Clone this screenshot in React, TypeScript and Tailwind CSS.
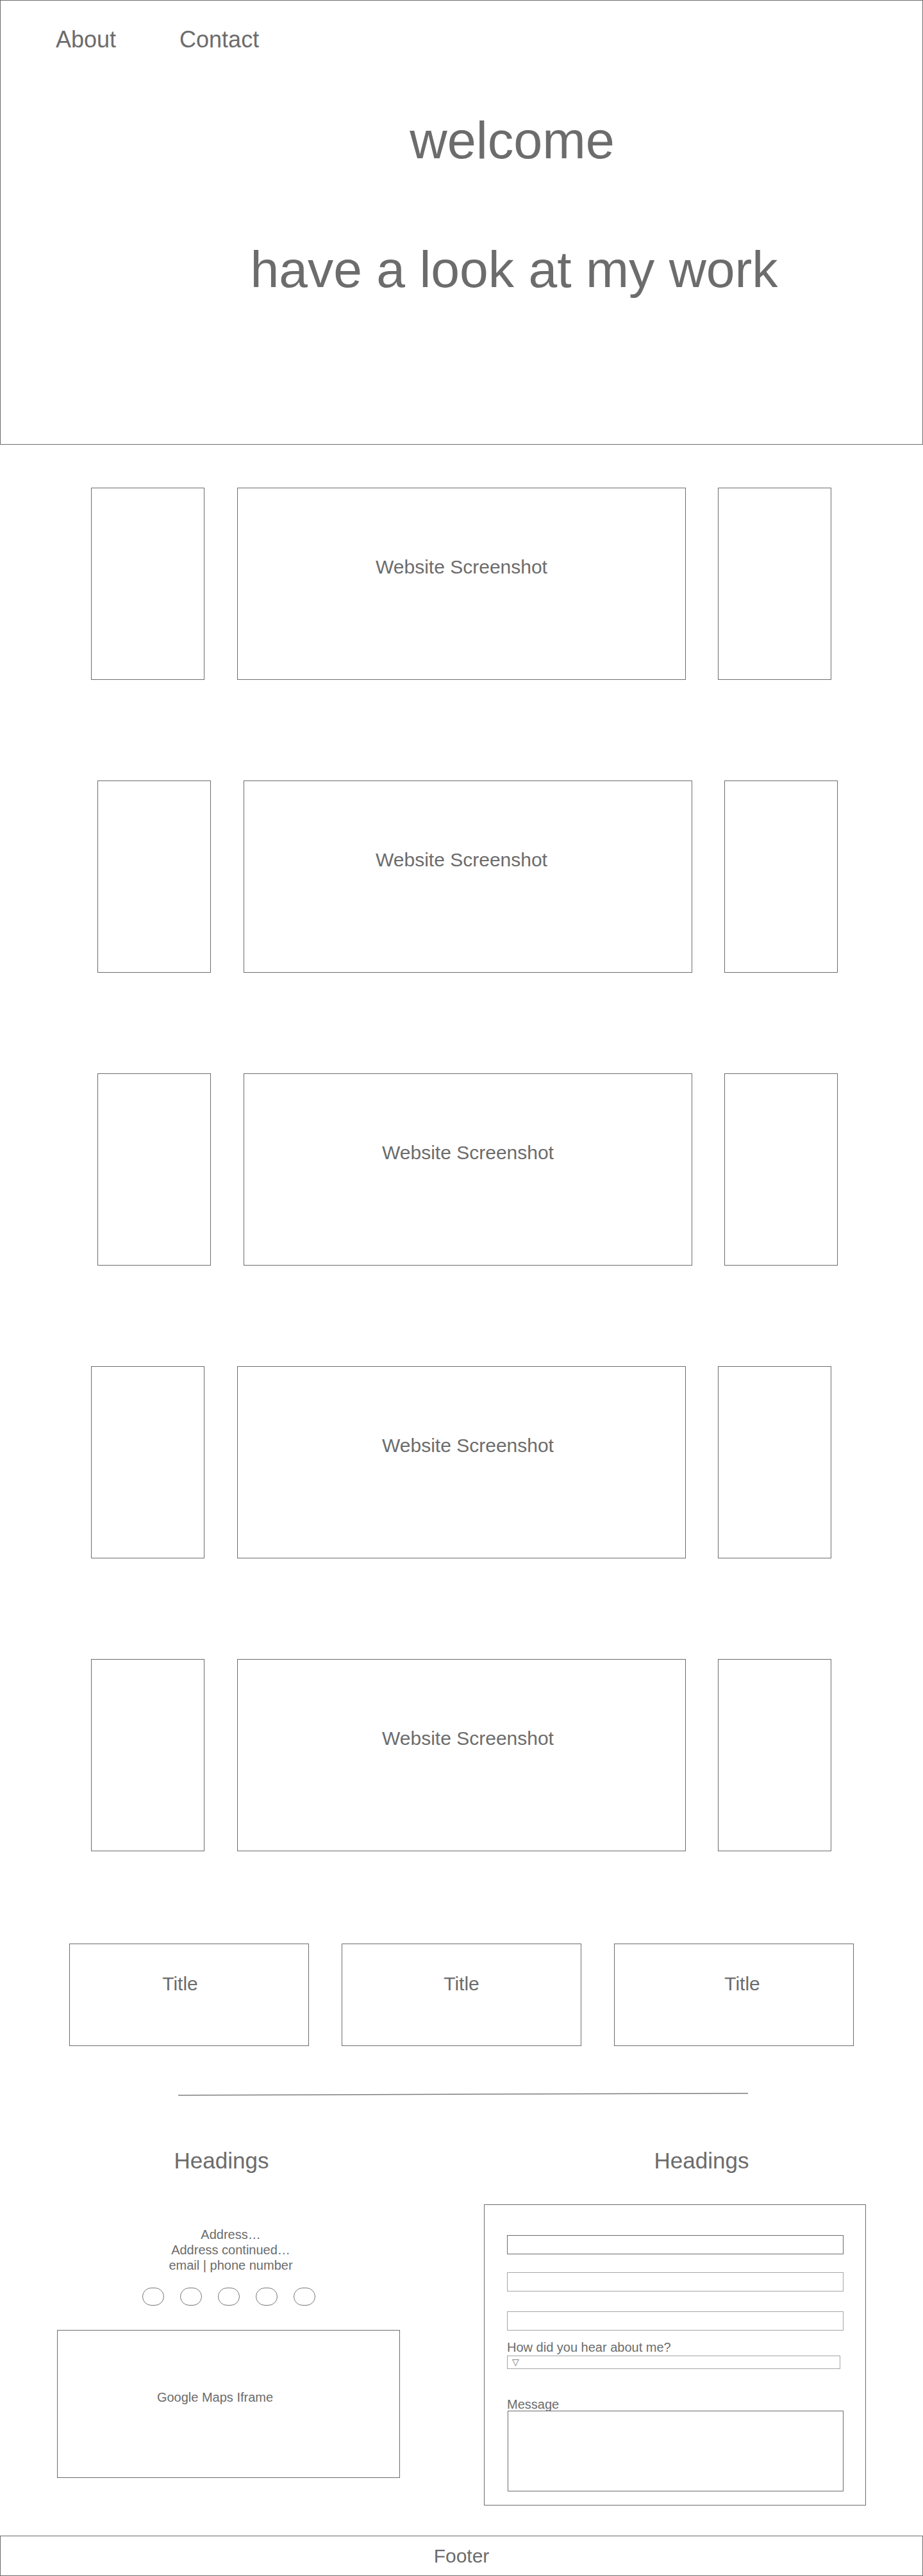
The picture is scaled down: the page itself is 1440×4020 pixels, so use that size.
const rows = [
  { offset: 'pl-[142px]', shift: '' },
  { offset: 'pl-[152px]', shift: 'pr-[20px]' },
  { offset: 'pl-[152px]', shift: '' },
  { offset: 'pl-[142px]', shift: 'pl-[20px]' },
  { offset: 'pl-[142px]', shift: 'pl-[20px]' },
];

const cards = ['pr-[28px]', '', 'pl-[26px]'];

function ProjectRow({ offset, shift }: { offset: string; shift: string }) {
  return (
    <div className={`flex h-[300px] ${offset}`}>
      <div className="w-[177px] h-full border border-[#6c6c6c]" />
      <div className={`ml-[51px] w-[700px] h-full border border-[#6c6c6c] pt-[108px] text-center text-[30px] leading-none ${shift}`}>
        Website Screenshot
      </div>
      <div className="ml-[50px] w-[177px] h-full border border-[#6c6c6c]" />
    </div>
  );
}

export default function App() {
  return (
    <div className="w-[1440px] bg-white text-[#6c6c6c] font-['Liberation_Sans',Arial,sans-serif]">
      {/* hero */}
      <header className="h-[694px] border border-[#6c6c6c]">
        <nav className="flex gap-[99px] pt-[43px] pl-[86px] text-[36px] leading-none">
          <a>About</a>
          <a>Contact</a>
        </nav>
        <h1 className="mt-[99px] pl-[158px] text-center text-[81px] leading-none">welcome</h1>
        <p className="mt-[120px] pl-[164px] text-center text-[80.5px] leading-none">have a look at my work</p>
      </header>

      {/* work */}
      <section className="flex flex-col gap-[157px] pt-[67px]">
        {rows.map((r, i) => (
          <ProjectRow key={i} offset={r.offset} shift={r.shift} />
        ))}
      </section>

      {/* cards */}
      <section className="mt-[144px] flex gap-[51px] pl-[108px]">
        {cards.map((c, i) => (
          <div key={i} className={`w-[374px] h-[160px] border border-[#6c6c6c] pt-[47px] text-center text-[30px] leading-none ${c}`}>
            Title
          </div>
        ))}
      </section>

      <svg className="mt-[71px] block" width="1440" height="10" viewBox="0 0 1440 10">
        <line x1="278" y1="5.7" x2="1167" y2="2.7" stroke="#7e7e7e" strokeWidth="1.5" />
      </svg>

      {/* contact */}
      <section className="flex items-start pt-[80px]">
        <div className="w-[720px]">
          <h2 className="pr-[29px] text-center text-[35px] leading-none">Headings</h2>
          <address className="mt-[86px] text-center text-[20px] leading-[24px] not-italic">
            <div>Address…</div>
            <div>Address continued…</div>
            <div>email | phone number</div>
          </address>
          <div className="mt-[23px] flex justify-center gap-[25px] pr-[6px]">
            {[0, 1, 2, 3, 4].map((i) => (
              <span key={i} className="w-[34px] h-[28px] rounded-full border border-[#777777]" />
            ))}
          </div>
          <div className="mt-[38px] ml-[89px] w-[535px] h-[231px] border border-[#6c6c6c] pt-[94px] pr-[42px] text-center text-[20px] leading-none">
            Google Maps Iframe
          </div>
        </div>

        <div className="w-[720px]">
          <h2 className="pl-[29px] text-center text-[35px] leading-none">Headings</h2>
          <form className="mt-[51px] ml-[35px] w-[596px] h-[470px] border border-[#6c6c6c] pt-[47px] pl-[35px]">
            <div className="w-[525px] h-[30px] border border-[#6c6c6c]" />
            <div className="mt-[28px] w-[525px] h-[30px] border border-[#a5a5a5]" />
            <div className="mt-[31px] w-[525px] h-[30px] border border-[#a5a5a5]" />
            <div className="mt-[16px] text-[20px] leading-none">How did you hear about me?</div>
            <div className="mt-[3px] w-[520px] h-[21px] border border-[#a5a5a5] pl-[7px] text-[14px] leading-[19px]">▽</div>
            <div className="mt-[45px] text-[20px] leading-none">Message</div>
            <div className="ml-[1px] w-[524px] h-[126px] border border-[#6c6c6c]" />
          </form>
        </div>
      </section>

      <footer className="mt-[47px] h-[63px] border border-[#6c6c6c] flex items-center justify-center text-[30px] leading-none">
        Footer
      </footer>
    </div>
  );
}
